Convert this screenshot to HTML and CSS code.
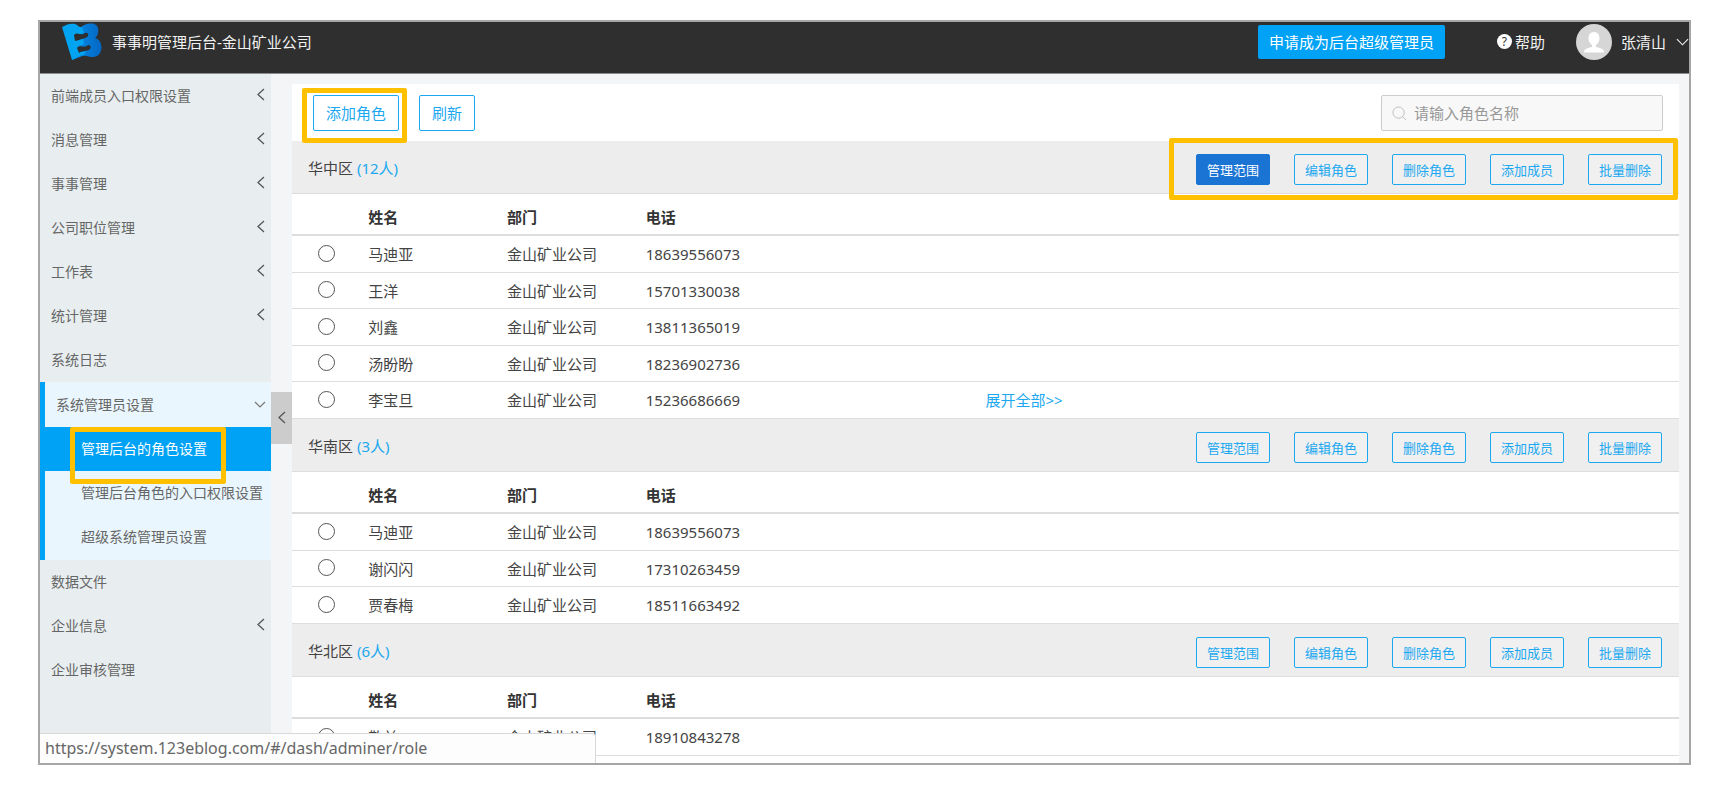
FILE: index.html
```html
<!DOCTYPE html>
<html lang="zh-CN">
<head>
<meta charset="utf-8">
<title>事事明管理后台</title>
<link rel="stylesheet" href="styles.css">
</head>
<body>
<div class="frame">
  <header class="topbar">
    <svg class="logo" viewBox="0 0 40 38" aria-hidden="true">
      <defs><linearGradient id="shade" x1="0" y1="0" x2="1" y2="0"><stop offset="0" stop-color="#0590e8"/><stop offset="1" stop-color="#0466c4"/></linearGradient></defs>
      <path fill="url(#shade)" d="M17 6C20 2 25 0 31 0.500C36 2 37 6 36 10C35.500 13 34 14 33 15C37 16 39 19 39.500 24C39.500 30 36 34 31 34C27 34 23 31 18 34L10 37L14 20Z"/>
      <path fill="#00a4f0" d="M0 4C5 1 9 0 13 1C16 2 17 5 20 4L22 10C18 12 15 10 13 11L14 17C17 18 19 16 21 16L22 21C19 23 17 22 15 24L17 29C20 30 22 28 24 28L22 32C17 32 14 35 10 37Z"/>
      <path fill="#2f2f2f" d="M12 12C16 9 19 13 23 10C25 9 27 11 26 13C24 16 20 15 17 17L13 18Z"/>
      <path fill="#2f2f2f" d="M15 25C19 21 22 26 26 22C28 22 30 24 28 26C25 29 21 27 17 30Z"/>
    </svg>
    <h1 class="brand">事事明管理后台-金山矿业公司</h1>
    <button class="apply" type="button">申请成为后台超级管理员</button>
    <a class="help" href="#help"><span class="help-mark">?</span>帮助</a>
    <button class="user" type="button">
      <svg class="avatar" viewBox="0 0 36 36" aria-hidden="true">
        <circle cx="18" cy="18" r="18" fill="#d6d6d6"/>
        <path fill="#fff" d="M18 8c4 0 5.500 3 5.500 6.500c0 3-1.500 5-3.500 6.500v2c4 1 8 1.500 8 5.500H8c0-4 4-4.500 8-5.500v-2c-2-1.500-3.500-3.500-3.500-6.500c0-3.500 1.500-6.500 5.500-6.500z"/>
      </svg>
      <span>张清山</span>
      <svg class="caret" viewBox="0 0 14 8" aria-hidden="true"><path d="M1 1l6 6 6-6"/></svg>
    </button>
  </header>

  <div class="body">
    <nav class="sidebar">
      <a class="item" href="#a">前端成员入口权限设置<svg class="arrow" viewBox="0 0 8 13"><path d="M7 1L1 6.500l6 5.500"/></svg></a>
      <a class="item" href="#b">消息管理<svg class="arrow" viewBox="0 0 8 13"><path d="M7 1L1 6.500l6 5.500"/></svg></a>
      <a class="item" href="#c">事事管理<svg class="arrow" viewBox="0 0 8 13"><path d="M7 1L1 6.500l6 5.500"/></svg></a>
      <a class="item" href="#d">公司职位管理<svg class="arrow" viewBox="0 0 8 13"><path d="M7 1L1 6.500l6 5.500"/></svg></a>
      <a class="item" href="#e">工作表<svg class="arrow" viewBox="0 0 8 13"><path d="M7 1L1 6.500l6 5.500"/></svg></a>
      <a class="item" href="#f">统计管理<svg class="arrow" viewBox="0 0 8 13"><path d="M7 1L1 6.500l6 5.500"/></svg></a>
      <a class="item" href="#g">系统日志</a>
      <div class="group">
        <a class="item group-title" href="#h">系统管理员设置<svg class="arrow-down" viewBox="0 0 12 8"><path d="M1 1l5 5 5-5"/></svg></a>
        <a class="item sub active" href="#i">管理后台的角色设置</a>
        <a class="item sub" href="#j">管理后台角色的入口权限设置</a>
        <a class="item sub" href="#k">超级系统管理员设置</a>
        <span class="mark mark-menu"></span>
      </div>
      <a class="item" href="#l">数据文件</a>
      <a class="item" href="#m">企业信息<svg class="arrow" viewBox="0 0 8 13"><path d="M7 1L1 6.500l6 5.500"/></svg></a>
      <a class="item" href="#n">企业审核管理</a>
    </nav>

    <div class="gutter">
      <button class="collapse" type="button" aria-label="收起"><svg class="arrow" viewBox="0 0 8 13"><path d="M7 1L1 6.500l6 5.500"/></svg></button>
    </div>

    <main class="panel">
      <div class="toolbar">
        <span class="marked">
          <button class="btn" type="button">添加角色</button>
          <span class="mark mark-add"></span>
        </span>
        <button class="btn" type="button">刷新</button>
        <label class="search">
          <svg class="search-icon" viewBox="0 0 16 16" aria-hidden="true"><circle cx="7" cy="7" r="6"/><path d="M11 11l4 4"/></svg>
          <input type="text" aria-label="角色名称" placeholder="请输入角色名称">
        </label>
      </div>

      <section>
        <div class="role">
          <h2>华中区 <span class="count">(12人)</span></h2>
          <div class="actions">
            <button class="act primary" type="button">管理范围</button>
            <button class="act" type="button">编辑角色</button>
            <button class="act" type="button">删除角色</button>
            <button class="act" type="button">添加成员</button>
            <button class="act" type="button">批量删除</button>
          </div>
          <span class="mark mark-actions"></span>
        </div>
        <table>
          <thead><tr><th class="c-pick"></th><th class="c-name">姓名</th><th class="c-name">部门</th><th class="c-tel">电话</th><th></th></tr></thead>
          <tbody>
            <tr><td><input type="radio" name="r1" aria-label="马迪亚"></td><td>马迪亚</td><td>金山矿业公司</td><td>18639556073</td><td></td></tr>
            <tr><td><input type="radio" name="r1" aria-label="王洋"></td><td>王洋</td><td>金山矿业公司</td><td>15701330038</td><td></td></tr>
            <tr><td><input type="radio" name="r1" aria-label="刘鑫"></td><td>刘鑫</td><td>金山矿业公司</td><td>13811365019</td><td></td></tr>
            <tr><td><input type="radio" name="r1" aria-label="汤盼盼"></td><td>汤盼盼</td><td>金山矿业公司</td><td>18236902736</td><td></td></tr>
            <tr><td><input type="radio" name="r1" aria-label="李宝旦"></td><td>李宝旦</td><td>金山矿业公司</td><td>15236686669</td><td><a class="more" href="#all">展开全部&gt;&gt;</a></td></tr>
          </tbody>
        </table>
      </section>

      <section>
        <div class="role">
          <h2>华南区 <span class="count">(3人)</span></h2>
          <div class="actions">
            <button class="act" type="button">管理范围</button>
            <button class="act" type="button">编辑角色</button>
            <button class="act" type="button">删除角色</button>
            <button class="act" type="button">添加成员</button>
            <button class="act" type="button">批量删除</button>
          </div>
        </div>
        <table>
          <thead><tr><th class="c-pick"></th><th class="c-name">姓名</th><th class="c-name">部门</th><th class="c-tel">电话</th><th></th></tr></thead>
          <tbody>
            <tr><td><input type="radio" name="r2" aria-label="马迪亚"></td><td>马迪亚</td><td>金山矿业公司</td><td>18639556073</td><td></td></tr>
            <tr><td><input type="radio" name="r2" aria-label="谢闪闪"></td><td>谢闪闪</td><td>金山矿业公司</td><td>17310263459</td><td></td></tr>
            <tr><td><input type="radio" name="r2" aria-label="贾春梅"></td><td>贾春梅</td><td>金山矿业公司</td><td>18511663492</td><td></td></tr>
          </tbody>
        </table>
      </section>

      <section>
        <div class="role">
          <h2>华北区 <span class="count">(6人)</span></h2>
          <div class="actions">
            <button class="act" type="button">管理范围</button>
            <button class="act" type="button">编辑角色</button>
            <button class="act" type="button">删除角色</button>
            <button class="act" type="button">添加成员</button>
            <button class="act" type="button">批量删除</button>
          </div>
        </div>
        <table>
          <thead><tr><th class="c-pick"></th><th class="c-name">姓名</th><th class="c-name">部门</th><th class="c-tel">电话</th><th></th></tr></thead>
          <tbody>
            <tr><td><input type="radio" name="r3" aria-label="敬前"></td><td>敬前</td><td>金山矿业公司</td><td>18910843278</td><td></td></tr>
          </tbody>
        </table>
      </section>
    </main>
  </div>

  <div class="status">https://system.123eblog.com/#/dash/adminer/role</div>
</div>
</body>
</html>
```
FILE: styles.css
```css
* { box-sizing: border-box; }

body {
  margin: 0;
  padding: 20px 39px 27px 38px;
  height: 100vh;
  background: #fff;
  color: #444;
  font: 15px/20px "Noto Sans", "Noto Sans CJK SC", sans-serif;
}

button, input { font: inherit; }
button { cursor: pointer; }
a { color: inherit; text-decoration: none; }
svg { flex: none; }

.frame {
  position: relative;
  display: flex;
  flex-direction: column;
  height: 100%;
  border: 2px solid #a6a6a6;
  overflow: hidden;
}

/* Top bar */
.topbar {
  display: flex;
  flex: none;
  align-items: center;
  height: 52px;
  padding: 0 0 12px 22px;
  background: #2f2f2f;
  border-bottom: 1px solid #8c8c8c;
  color: #f2f2f2;
}
.logo { width: 40px; height: 38px; }
.brand { margin: 0 auto 0 10px; font-size: 15px; font-weight: 400; }
.apply {
  height: 34px;
  padding: 0 11px;
  border: 0;
  border-radius: 2px;
  background: #00a2f5;
  color: #fff;
}
.help { display: flex; align-items: center; gap: 3px; margin-left: 52px; }
.help-mark {
  width: 15px;
  border-radius: 50%;
  background: #fff;
  color: #2f2f2f;
  font-size: 12px;
  line-height: 15px;
  text-align: center;
}
.user {
  display: flex;
  align-items: center;
  margin-left: 31px;
  padding: 0;
  border: 0;
  background: none;
  color: inherit;
}
.user span { margin: 0 10px 0 9px; }
.avatar { width: 36px; height: 36px; }
.caret { width: 13px; height: 8px; fill: none; stroke: #f2f2f2; stroke-width: 1.2; }

/* Layout */
.body { display: flex; flex: 1; min-height: 0; background: #f3f5f7; }
.sidebar { flex: none; width: 231px; background: #e8eef0; }
.gutter { position: relative; flex: none; width: 21px; }
.panel { flex: 1; margin: 10px 10px 0 0; background: #fff; }

/* Sidebar */
.item {
  display: flex;
  align-items: center;
  justify-content: space-between;
  height: 44px;
  padding: 0 6px 0 11px;
  color: #666;
  font-size: 14px;
}
.arrow { width: 8px; height: 13px; fill: none; stroke: #555; stroke-width: 1.3; }
.item .arrow { margin-bottom: 3px; }
.arrow-down { width: 12px; height: 8px; fill: none; stroke: #777; stroke-width: 1.2; }
.group {
  position: relative;
  padding-bottom: 1px;
  border-left: 5px solid #00a2f5;
  background: #eaf6fe;
}
.group-title { height: 45px; padding: 0 5px 0 11px; }
.sub { padding-left: 36px; }
.active { background: #00a2f5; color: #fff; }
.collapse {
  position: absolute;
  top: 318px;
  left: 0;
  width: 21px;
  height: 52px;
  padding: 0;
  border: 0;
  background: #ccc;
}

/* Highlight frames */
.mark {
  position: absolute;
  z-index: 1;
  border: 5px solid #ffc000;
  border-radius: 2px;
  pointer-events: none;
}
.marked { position: relative; }
.mark-menu { top: 45px; left: 25px; width: 156px; height: 57px; }
.mark-add { inset: -7px -8px -12px -11px; }
.mark-actions { top: -3px; right: 1px; width: 509px; height: 62px; }

/* Toolbar */
.toolbar {
  display: flex;
  gap: 20px;
  padding: 11px 16px 10px 21px;
}
.btn {
  height: 36px;
  padding: 0 12px;
  border: 1px solid #1ba8f0;
  border-radius: 2px;
  background: #fff;
  color: #1ba8f0;
}
.search {
  display: flex;
  align-items: center;
  gap: 7px;
  width: 282px;
  height: 36px;
  margin-left: auto;
  padding: 0 10px;
  border: 1px solid #ccc;
  border-radius: 2px;
  background: #f8f8f8;
}
.search-icon { width: 15px; height: 15px; fill: none; stroke: #bbb; stroke-width: 1; }
.search input {
  flex: 1;
  min-width: 0;
  padding: 0;
  border: 0;
  outline: 0;
  background: none;
}
.search input::placeholder { color: #999; opacity: 1; }

/* Role sections */
.role {
  position: relative;
  display: flex;
  align-items: center;
  justify-content: space-between;
  padding: 13px 17px 8px 16px;
  border-bottom: 1px solid #ddd;
  background: #ededed;
}
.role h2 { margin: 0 0 4px; font-size: 15px; font-weight: 400; }
.count { color: #1ba8f0; }
.actions { display: flex; gap: 24px; }
.act {
  width: 74px;
  height: 31px;
  padding: 0;
  border: 1px solid #1ba8f0;
  border-radius: 2px;
  background: #f0f0f0;
  color: #1ba8f0;
  font-size: 13px;
}
.primary { border-color: #1a74d4; background: #1a74d4; color: #fff; }

table { width: 100%; border-collapse: separate; border-spacing: 0; table-layout: fixed; }
th, td { padding: 0; text-align: left; }
th { height: 42px; padding-top: 5px; border-bottom: 2px solid #ddd; color: #333; font-weight: 700; }
td { height: 37px; border-bottom: 1px solid #ddd; }
tr:nth-child(even) td { height: 36px; }
.c-pick { width: 5.5%; }
.c-name { width: 10%; }
.c-tel { width: 24.5%; }
td input {
  display: block;
  appearance: none;
  width: 17px;
  height: 17px;
  margin: 0 0 2px 26px;
  border: 1px solid #555;
  border-radius: 50%;
  background: #fff;
}
.more { color: #1ba8f0; }

/* Link preview */
.status {
  position: absolute;
  bottom: 0;
  left: 0;
  z-index: 2;
  width: 556px;
  height: 30px;
  padding: 0 5px;
  border: 1px solid #d8d8d8;
  border-width: 1px 1px 0 0;
  border-top-right-radius: 4px;
  background: #fdfdfd;
  color: #666;
  font-size: 16px;
  line-height: 28px;
}
```
